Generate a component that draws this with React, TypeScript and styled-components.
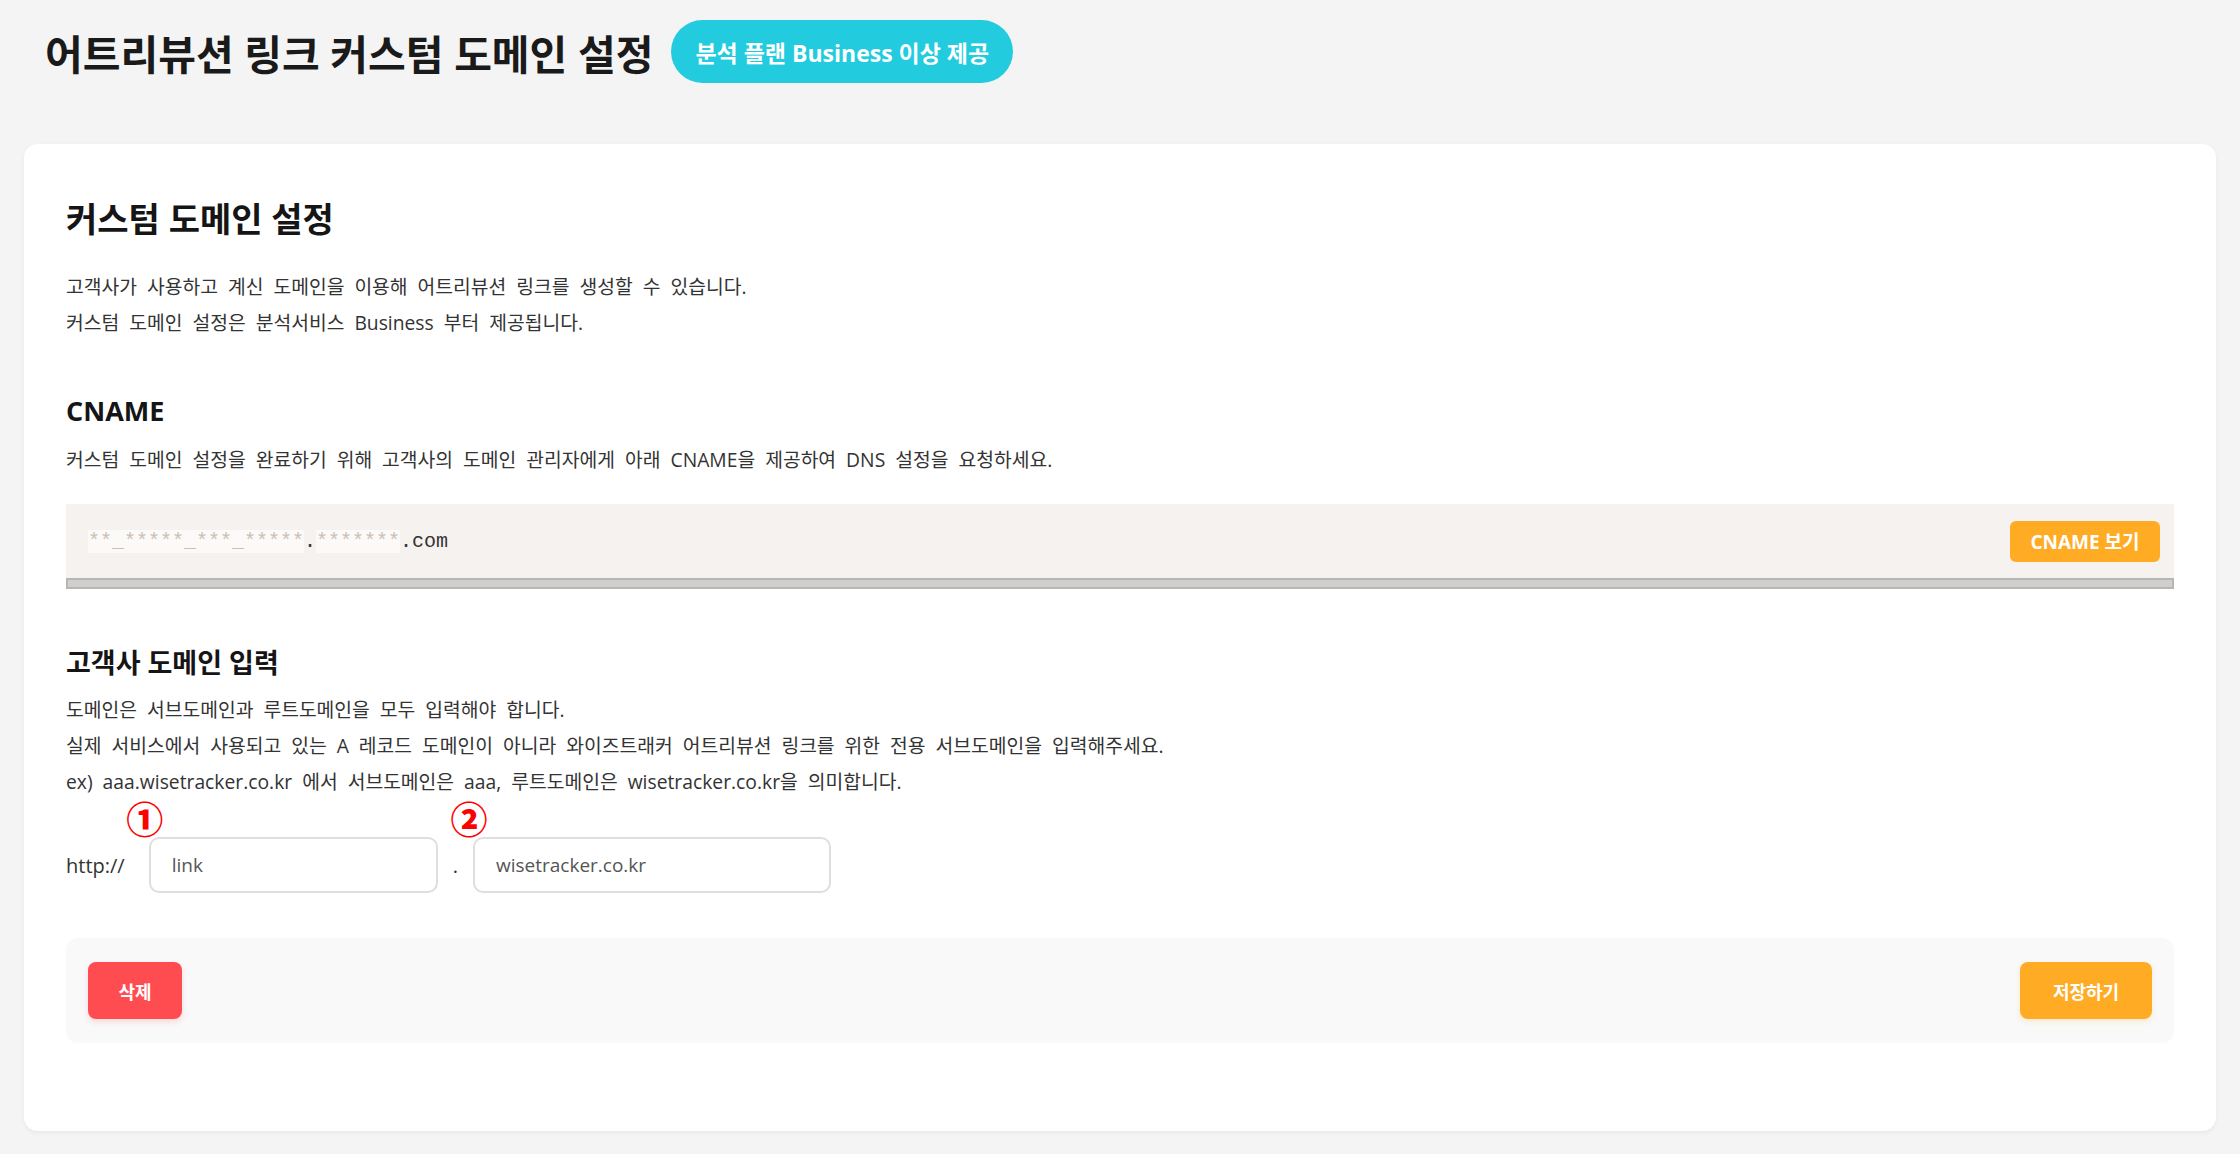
import React from 'react';
import styled, { createGlobalStyle } from 'styled-components';

const GlobalStyle = createGlobalStyle`
  body {
    margin: 0;
    background: #f4f4f4;
    font-family: "Open Sans", "Noto Sans CJK KR", sans-serif;
    color: #333;
  }
`;

const Page = styled.div`
  padding: 20px 24px 23px;
`;

const Header = styled.header`
  display: flex;
  align-items: center;
  gap: 18px;
  height: 63px;
  padding-left: 21px;
`;

const PageTitle = styled.h1`
  margin: 0;
  font-size: 41px;
  font-weight: 700;
  color: #1a1a1a;
  line-height: 1;
  padding-top: 6px;
`;

const PlanBadge = styled.span`
  display: inline-flex;
  align-items: center;
  height: 63px;
  padding: 0 24px;
  border-radius: 32px;
  background: #23cbdf;
  color: #fff;
  font-size: 23px;
  font-weight: 700;
  white-space: nowrap;
`;

const Card = styled.main`
  margin-top: 61px;
  background: #fff;
  border-radius: 14px;
  padding: 55px 42px 88px;
  box-shadow: 0 2px 5px rgba(0, 0, 0, 0.05);
`;

const CardTitle = styled.h2`
  margin: 0 0 30px;
  font-size: 34px;
  line-height: 40px;
  font-weight: 700;
  color: #151515;
`;

const SectionTitle = styled.h3<{ $top: number; $bottom: number }>`
  margin: ${(p) => p.$top}px 0 ${(p) => p.$bottom}px;
  font-size: 27px;
  line-height: 36px;
  font-weight: 700;
  color: #151515;
`;

const Desc = styled.p`
  margin: 0;
  font-size: 19.3px;
  line-height: 36px;
  word-spacing: 5px;
  color: #333;
`;

const CnameBox = styled.div`
  margin-top: 26px;
  background: #f5f2ef;
`;

const CnameRow = styled.div`
  height: 74px;
  display: flex;
  align-items: center;
  justify-content: space-between;
  padding: 0 14px 0 22px;
`;

const MaskedValue = styled.code`
  font-family: "Liberation Mono", monospace;
  font-size: 20px;
  line-height: 25px;
  color: #333;
`;

const Masked = styled.span`
  background: #fbfaf8;
  color: #cbbfb3;
`;

const OrangeButton = styled.button<{ $w: number; $h: number; $size: number }>`
  width: ${(p) => p.$w}px;
  height: ${(p) => p.$h}px;
  border: none;
  border-radius: ${(p) => (p.$h > 50 ? 8 : 6)}px;
  background: #ffab24;
  color: #fff;
  font-family: inherit;
  font-size: ${(p) => p.$size}px;
  font-weight: 700;
  cursor: pointer;
  white-space: nowrap;
  box-shadow: ${(p) => (p.$h > 50 ? '0 3px 6px rgba(255, 171, 36, 0.18)' : 'none')};
`;

const DeleteButton = styled.button`
  width: 94px;
  height: 57px;
  border: none;
  border-radius: 8px;
  background: #ff4c51;
  color: #fff;
  font-family: inherit;
  font-size: 18px;
  font-weight: 700;
  cursor: pointer;
  box-shadow: 0 3px 6px rgba(255, 76, 81, 0.18);
`;

const ScrollTrack = styled.div`
  height: 7px;
  background: #d0cfcd;
  border: 2px solid #b7b6b5;
`;

const InputRow = styled.div`
  margin-top: 37px;
  display: flex;
  align-items: center;
  font-size: 20px;
`;

const Protocol = styled.span`
  color: #333;
  margin-right: 24px;
`;

const Dot = styled.span`
  margin: 0 15px;
  color: #333;
`;

const Field = styled.div<{ $w: number }>`
  position: relative;
  width: ${(p) => p.$w}px;
`;

const Marker = styled.span`
  position: absolute;
  left: -22px;
  top: -35px;
  width: 36px;
  height: 33px;
  display: flex;
  align-items: center;
  justify-content: center;
  font-family: "Noto Sans CJK KR", sans-serif;
  font-size: 37px;
  font-weight: 900;
  line-height: 33px;
  color: #ff0000;
`;

const TextInput = styled.input`
  box-sizing: border-box;
  width: 100%;
  height: 56px;
  padding: 0 21px;
  border: 2px solid #dedede;
  border-radius: 10px;
  font-family: inherit;
  font-size: 19px;
  color: #555;
  background: #fff;
  outline: none;
`;

const Footer = styled.div`
  margin-top: 45px;
  display: flex;
  justify-content: space-between;
  align-items: center;
  padding: 24px 22px;
  background: #f9f9f9;
  border-radius: 12px;
`;

export default function App() {
  return (
    <Page>
      <GlobalStyle />
      <Header>
        <PageTitle>어트리뷰션 링크 커스텀 도메인 설정</PageTitle>
        <PlanBadge>분석 플랜 Business 이상 제공</PlanBadge>
      </Header>

      <Card>
        <CardTitle>커스텀 도메인 설정</CardTitle>
        <Desc>고객사가 사용하고 계신 도메인을 이용해 어트리뷰션 링크를 생성할 수 있습니다.</Desc>
        <Desc>커스텀 도메인 설정은 분석서비스 Business 부터 제공됩니다.</Desc>

        <SectionTitle $top={52} $bottom={13}>CNAME</SectionTitle>
        <Desc>커스텀 도메인 설정을 완료하기 위해 고객사의 도메인 관리자에게 아래 CNAME을 제공하여 DNS 설정을 요청하세요.</Desc>

        <CnameBox>
          <CnameRow>
            <MaskedValue>
              <Masked>**_*****_***_*****</Masked>.<Masked>*******</Masked>.com
            </MaskedValue>
            <OrangeButton $w={150} $h={41} $size={19}>CNAME 보기</OrangeButton>
          </CnameRow>
          <ScrollTrack />
        </CnameBox>

        <SectionTitle $top={56} $bottom={11}>고객사 도메인 입력</SectionTitle>
        <Desc>도메인은 서브도메인과 루트도메인을 모두 입력해야 합니다.</Desc>
        <Desc>실제 서비스에서 사용되고 있는 A 레코드 도메인이 아니라 와이즈트래커 어트리뷰션 링크를 위한 전용 서브도메인을 입력해주세요.</Desc>
        <Desc>ex) aaa.wisetracker.co.kr 에서 서브도메인은 aaa, 루트도메인은 wisetracker.co.kr을 의미합니다.</Desc>

        <InputRow>
          <Protocol>http://</Protocol>
          <Field $w={289}>
            <Marker>①</Marker>
            <TextInput defaultValue="link" />
          </Field>
          <Dot>.</Dot>
          <Field $w={358}>
            <Marker>②</Marker>
            <TextInput defaultValue="wisetracker.co.kr" />
          </Field>
        </InputRow>

        <Footer>
          <DeleteButton>삭제</DeleteButton>
          <OrangeButton $w={132} $h={57} $size={18}>저장하기</OrangeButton>
        </Footer>
      </Card>
    </Page>
  );
}
